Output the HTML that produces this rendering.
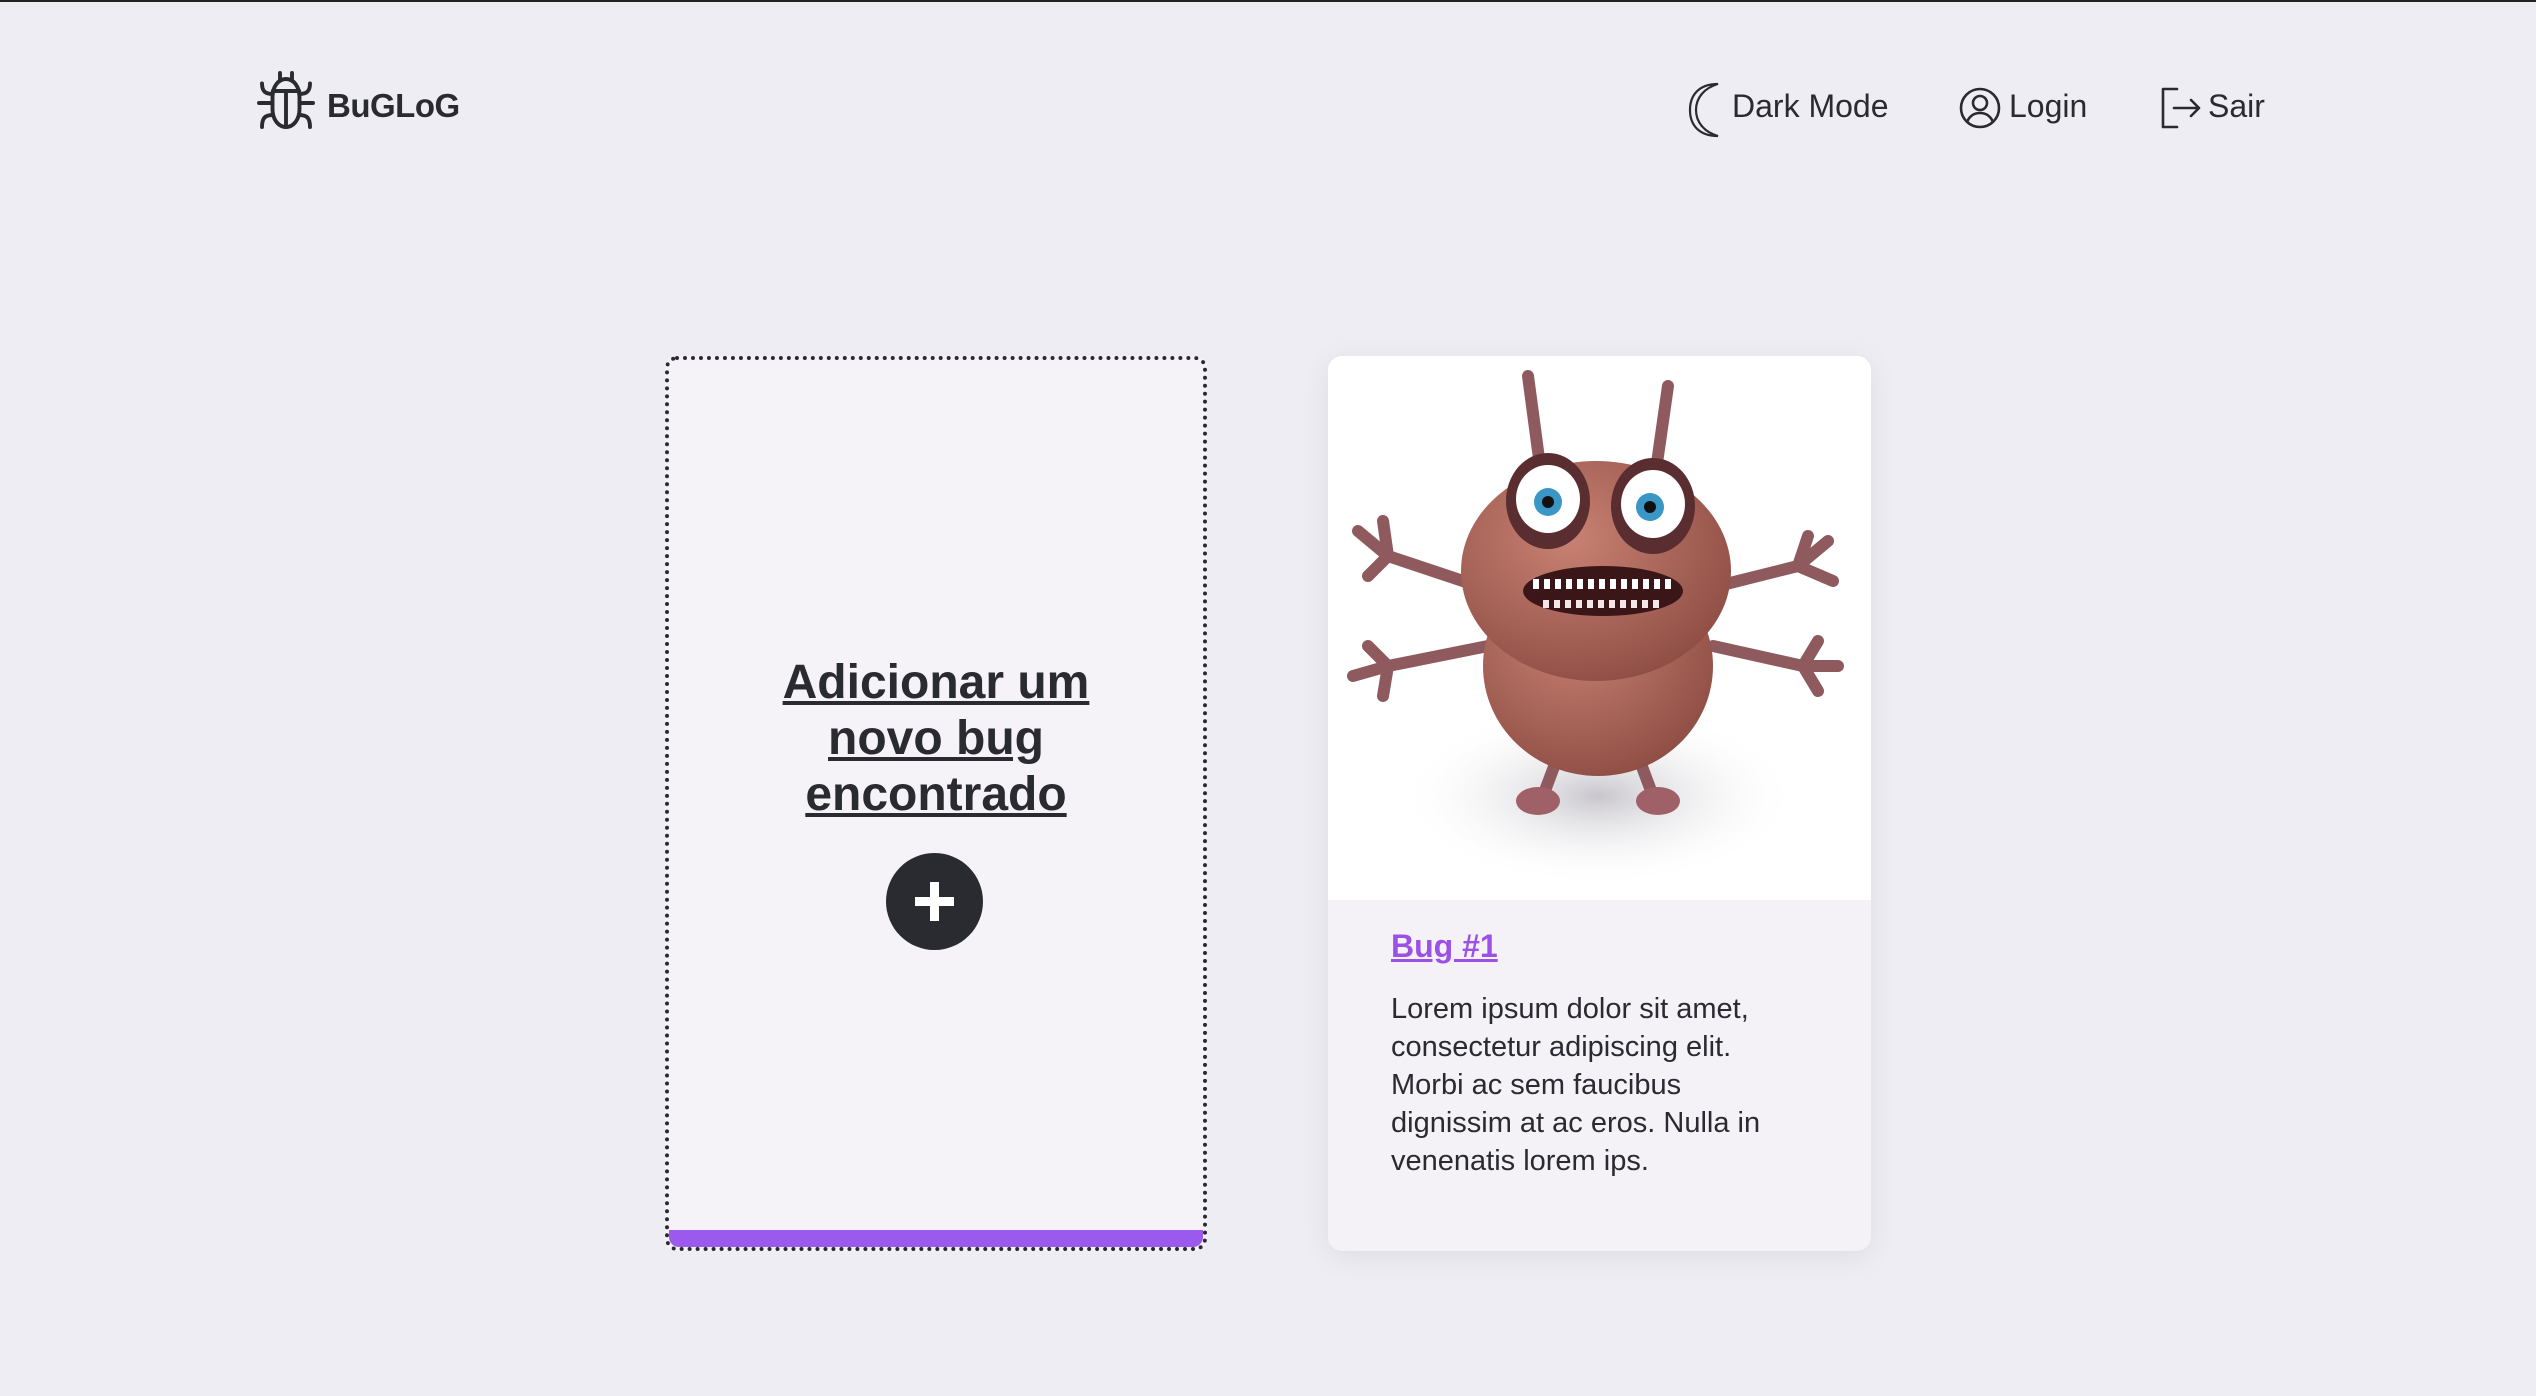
<!DOCTYPE html>
<html><head><meta charset="utf-8">
<style>
*{margin:0;padding:0;box-sizing:border-box}
html,body{width:2536px;height:1396px;overflow:hidden}
body{background:#efedf4;font-family:"Liberation Sans",Arial,sans-serif;color:#2a2a31;position:relative;border-top:2px solid #222}
.abs{position:absolute}
.nav{font-size:32px;top:82px;line-height:44px;color:#2a2a31}
.card1{left:665px;top:354px;width:542px;height:895px;border:4px dotted #2a2a31;border-radius:12px;background:#f5f3f8;overflow:hidden}
.bar{position:absolute;left:0;right:0;bottom:0;height:17px;background:#9b59ee;border-radius:0 0 10px 10px}
.title{position:absolute;left:0;right:0;top:295px;text-align:center;font-weight:bold;font-size:48px;line-height:56px;text-decoration:underline;color:#2a2a31}
.card2{left:1328px;top:354px;width:543px;height:895px;border-radius:14px;background:#f4f2f7;overflow:hidden;box-shadow:0 6px 30px rgba(0,0,0,0.07)}
.img{position:absolute;left:0;top:0;width:543px;height:544px;background:#fff}
.h{position:absolute;left:63px;top:572px;font-size:32px;font-weight:bold;color:#9b51e6;text-decoration:underline}
.p{position:absolute;left:63px;top:634px;width:400px;font-size:29px;line-height:38px;color:#2a2a31}
</style></head><body>
<svg class="abs" style="left:250px;top:62px" width="72" height="72" viewBox="0 0 24 24" fill="none" stroke="#2a2a31" stroke-width="1.3" stroke-linecap="round">
<path d="M12 5c-2.5 0-4.5 2.5-4.5 6v4c0 3.5 2 6 4.5 6s4.5-2.5 4.5-6v-4c0-3.5-2-6-4.5-6z"/>
<path d="M7.6 9h8.8M12 9v12M10 5.5V3M14 5.5V3M3 13h4.5M16.5 13H21M7.6 10C5 10 4 9 4 6.5M16.4 10c2.6 0 3.6-1 3.6-3.5M7.6 17c-2.6 0-3.6 1-3.6 4M16.4 17c2.6 0 3.6 1 3.6 4"/>
</svg>
<div class="abs" style="left:327px;top:84px;font-size:33px;font-weight:bold;line-height:40px;letter-spacing:-0.5px">BuGLoG</div>

<svg class="abs" style="left:1688px;top:80px" width="34" height="56" viewBox="0 0 34 56" fill="none" stroke="#2a2a31" stroke-width="2.2"><path d="M30 2C16 6 8 16 8 28s8 22 22 26C10 54 2 42 2 28S10 2 30 2z"/></svg>
<div class="abs nav" style="left:1732px">Dark Mode</div>
<svg class="abs" style="left:1958px;top:84px" width="44" height="44" viewBox="0 0 44 44" fill="none" stroke="#2a2a31" stroke-width="2.6"><circle cx="22" cy="22" r="19"/><circle cx="22" cy="17" r="7"/><path d="M9 36c3-7 8-9 13-9s10 2 13 9"/></svg>
<div class="abs nav" style="left:2009px">Login</div>
<svg class="abs" style="left:2158px;top:84px" width="44" height="44" viewBox="0 0 44 44" fill="none" stroke="#2a2a31" stroke-width="2.6" stroke-linecap="round" stroke-linejoin="round"><path d="M19 3H5v38h14M16 22h25M33 14l8 8-8 8"/></svg>
<div class="abs nav" style="left:2208px">Sair</div>

<div class="abs card1">
<div class="title">Adicionar um<br>novo bug<br>encontrado</div>
<svg class="abs" width="97" height="97" viewBox="0 0 97 97" style="left:217px;top:493px"><circle cx="48.5" cy="48.5" r="48.5" fill="#2a2a31"/><path d="M48.5 29v39M29 48.5h39" stroke="#fff" stroke-width="9"/></svg>
<div class="bar"></div>
</div>

<div class="abs card2">
<div class="img">
<svg width="543" height="544" viewBox="0 0 543 544">
<defs><radialGradient id="sh" cx="50%" cy="50%" r="50%"><stop offset="0" stop-color="#c8c6cc"/><stop offset="1" stop-color="#fff" stop-opacity="0"/></radialGradient>
<radialGradient id="bd" cx="40%" cy="35%" r="70%"><stop offset="0" stop-color="#c98273"/><stop offset="1" stop-color="#8e4d44"/></radialGradient></defs>
<ellipse cx="270" cy="440" rx="200" ry="90" fill="url(#sh)"/>
<g stroke="#8e5a5e" stroke-width="12" stroke-linecap="round" fill="none">
<path d="M220 170L200 20M320 170L340 30"/>
<path d="M150 230L60 200M60 200L30 175M60 200L40 220M60 200L55 165M160 290L60 310M60 310L25 320M60 310L40 290M60 310L55 340"/>
<path d="M390 230L470 210M470 210L500 185M470 210L505 225M470 210L480 180M385 290L475 310M475 310L510 310M475 310L490 285M475 310L490 335"/>
<path d="M230 400L215 440M310 400L325 440"/>
</g>
<ellipse cx="210" cy="445" rx="22" ry="14" fill="#a06068"/><ellipse cx="330" cy="445" rx="22" ry="14" fill="#a06068"/>
<ellipse cx="270" cy="310" rx="115" ry="110" fill="url(#bd)"/>
<ellipse cx="268" cy="215" rx="135" ry="110" fill="url(#bd)"/>
<ellipse cx="220" cy="145" rx="42" ry="48" fill="#5a2e30"/><ellipse cx="220" cy="143" rx="32" ry="34" fill="#fff"/><circle cx="220" cy="146" r="14" fill="#3a96c4"/><circle cx="220" cy="146" r="6" fill="#111"/>
<ellipse cx="325" cy="150" rx="42" ry="48" fill="#5a2e30"/><ellipse cx="325" cy="148" rx="32" ry="34" fill="#fff"/><circle cx="322" cy="151" r="14" fill="#3a96c4"/><circle cx="322" cy="151" r="6" fill="#111"/>
<ellipse cx="275" cy="235" rx="80" ry="25" fill="#3a1618"/>
<path d="M205 228h140" stroke="#fff" stroke-width="10" stroke-dasharray="6 5"/>
<path d="M215 248h120" stroke="#f2e6e6" stroke-width="8" stroke-dasharray="6 5"/>
</svg>
</div>
<div class="h">Bug #1</div>
<div class="p">Lorem ipsum dolor sit amet, consectetur adipiscing elit. Morbi ac sem faucibus dignissim at ac eros. Nulla in venenatis lorem ips.</div>
</div>
</body></html>
